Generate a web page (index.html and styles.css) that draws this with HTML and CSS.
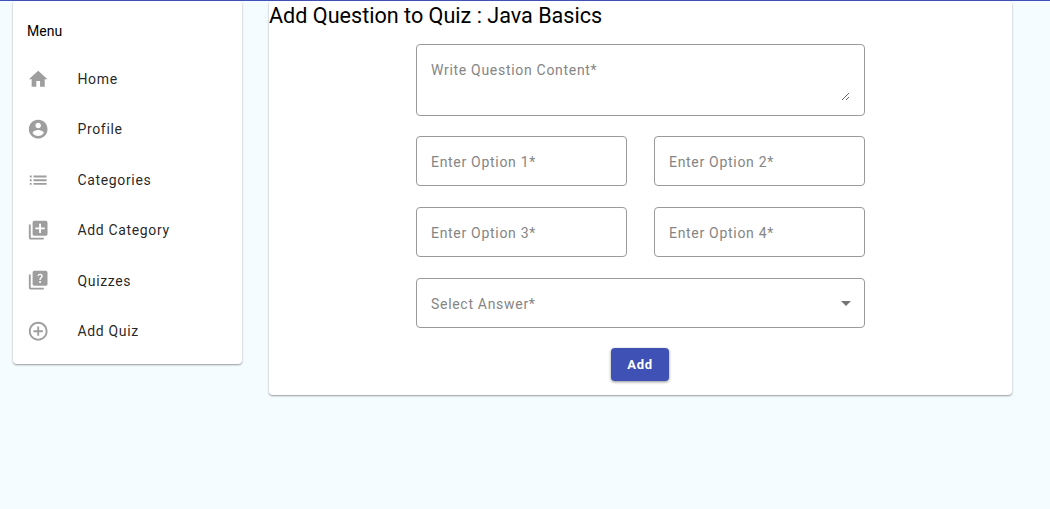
FILE: index.html
```html
<!DOCTYPE html>
<html>
<head>
  <title>Add Question</title>
  <link rel="stylesheet" href="styles.css">
</head>
<body>
  <div class="page">
    <aside class="card sidebar">
      <div class="menu-title">Menu</div>
      <ul class="menu">
        <li class="menu-item">
          <svg class="icon" viewBox="0 0 24 24"><path d="M10 20v-6h4v6h5v-8h3L12 3 2 12h3v8z"/></svg>
          <span>Home</span>
        </li>
        <li class="menu-item">
          <svg class="icon" viewBox="0 0 24 24"><path d="M12 2C6.48 2 2 6.48 2 12s4.48 10 10 10 10-4.48 10-10S17.52 2 12 2zm0 3c1.66 0 3 1.34 3 3s-1.34 3-3 3-3-1.34-3-3 1.34-3 3-3zm0 14.2c-2.5 0-4.71-1.28-6-3.22.03-1.99 4-3.08 6-3.08 1.99 0 5.97 1.09 6 3.08-1.29 1.94-3.5 3.22-6 3.22z"/></svg>
          <span>Profile</span>
        </li>
        <li class="menu-item">
          <svg class="icon" viewBox="0 0 24 24"><path d="M3 13h2v-2H3v2zm0 4h2v-2H3v2zm0-8h2V7H3v2zm4 4h14v-2H7v2zm0 4h14v-2H7v2zM7 7v2h14V7H7z"/></svg>
          <span>Categories</span>
        </li>
        <li class="menu-item">
          <svg class="icon" viewBox="0 0 24 24"><path d="M4 6H2v14c0 1.1.9 2 2 2h14v-2H4V6zm16-4H8c-1.1 0-2 .9-2 2v12c0 1.1.9 2 2 2h12c1.1 0 2-.9 2-2V4c0-1.1-.9-2-2-2zm-1 9h-4v4h-2v-4H9V9h4V5h2v4h4v2z"/></svg>
          <span>Add Category</span>
        </li>
        <li class="menu-item">
          <svg class="icon" viewBox="0 0 24 24"><path d="M4 6H2v14c0 1.1.9 2 2 2h14v-2H4V6zm16-4H8c-1.1 0-2 .9-2 2v12c0 1.1.9 2 2 2h12c1.1 0 2-.9 2-2V4c0-1.1-.9-2-2-2zm-5.99 13c-.59 0-1.05-.47-1.05-1.05 0-.59.47-1.04 1.05-1.04.59 0 1.04.45 1.04 1.04-.01.58-.45 1.05-1.04 1.05zm2.5-6.17c-.63.93-1.23 1.21-1.56 1.81-.13.24-.18.4-.18 1.18h-1.52c0-.41-.06-1.08.27-1.65.41-.73 1.18-1.16 1.63-1.8.48-.68.21-1.94-1.14-1.94-.88 0-1.32.67-1.5 1.23l-1.37-.57C11.51 5.96 12.52 5 13.99 5c1.23 0 2.08.56 2.51 1.26.37.61.58 1.73.01 2.57z"/></svg>
          <span>Quizzes</span>
        </li>
        <li class="menu-item">
          <svg class="icon" viewBox="0 0 24 24"><path d="M13 7h-2v4H7v2h4v4h2v-4h4v-2h-4V7zm-1-5C6.48 2 2 6.48 2 12s4.48 10 10 10 10-4.48 10-10S17.52 2 12 2zm0 18c-4.41 0-8-3.59-8-8s3.59-8 8-8 8 3.59 8 8-3.59 8-8 8z"/></svg>
          <span>Add Quiz</span>
        </li>
      </ul>
    </aside>

    <main class="card content">
      <h1 class="title">Add Question to Quiz : Java Basics</h1>
      <form class="question-form">
        <div class="field field-area">
          <textarea class="area-input" placeholder="Write Question Content*"></textarea>
        </div>
        <div class="option-row">
          <input class="field" type="text" placeholder="Enter Option 1*">
          <input class="field" type="text" placeholder="Enter Option 2*">
        </div>
        <div class="option-row">
          <input class="field" type="text" placeholder="Enter Option 3*">
          <input class="field" type="text" placeholder="Enter Option 4*">
        </div>
        <div class="field select">
          <span>Select Answer*</span>
          <span class="select-arrow"></span>
        </div>
        <button class="add-button" type="button">Add</button>
      </form>
    </main>
  </div>
</body>
</html>
```

FILE: styles.css
```css
html, body {
  height: 100%;
}

body {
  margin: 0;
  background-color: #f5fcff;
  border-top: 1px solid #3f51b5;
  box-sizing: border-box;
  color: #000;
  font-family: Roboto, "Liberation Sans", sans-serif;
}

.page {
  display: flex;
  align-items: flex-start;
  gap: 27px;
  padding-left: 13px;
}

.card {
  background-color: #fff;
  border-radius: 4px;
  box-shadow: 0 1px 2px rgba(0, 0, 0, 0.4);
}

.sidebar {
  width: 229px;
  padding-top: 8px;
  padding-bottom: 8px;
}

.menu-title {
  height: 44.9px;
  line-height: 44px;
  padding-left: 14px;
  font-size: 14px;
}

.menu {
  list-style: none;
  margin: 0;
  padding: 0;
}

.menu-item {
  display: flex;
  align-items: center;
  gap: 27.5px;
  height: 50.4px;
  padding-left: 13px;
  font-size: 14px;
  letter-spacing: 0.65px;
  color: rgba(0, 0, 0, 0.87);
}

/* icon glyph is a bit smaller than its 24px slot */
.icon {
  width: 22.4px;
  height: 22.4px;
  margin: 0 0.8px;
  fill: #9e9e9e;
}

.content {
  width: 743px;
  padding-bottom: 14px;
}

.title {
  margin: 0;
  height: 29px;
  line-height: 29px;
  font-size: 21.6px;
  font-weight: 400;
}

.question-form {
  display: flex;
  flex-direction: column;
  gap: 20.7px;
  width: 449px;
  margin: 13.6px auto 0;
}

.field {
  display: block;
  box-sizing: border-box;
  width: 100%;
  height: 50px;
  padding: 2px 14px 0;
  background-color: #fff;
  border: 1px solid #9a9a9a;
  border-radius: 4px;
  outline: none;
  color: #858585;
  font-family: inherit;
  font-size: 14px;
  letter-spacing: 0.7px;
}

.field::placeholder {
  color: #858585;
  opacity: 1;
}

.field-area {
  height: 72px;
  padding: 17px 14px 14px;
}

.area-input {
  display: block;
  box-sizing: border-box;
  width: 100%;
  height: 100%;
  margin: 0;
  padding: 0;
  border: none;
  outline: none;
  color: inherit;
  font: inherit;
  line-height: 16px;
  letter-spacing: inherit;
}

.area-input::placeholder {
  color: #858585;
  opacity: 1;
}

.option-row {
  display: grid;
  grid-template-columns: 211px 211px;
  justify-content: space-between;
}

.select {
  display: flex;
  align-items: center;
  justify-content: space-between;
}

.select-arrow {
  width: 0;
  height: 0;
  margin-right: -1px;
  border-left: 5px solid transparent;
  border-right: 5px solid transparent;
  border-top: 5px solid #757575;
}

.add-button {
  align-self: center;
  width: 58px;
  height: 33px;
  margin-right: 1px;
  border: none;
  border-radius: 4px;
  background-color: #3f51b5;
  box-shadow: 0 1px 3px rgba(0, 0, 0, 0.45);
  color: #fff;
  font-family: inherit;
  font-size: 13px;
  font-weight: 700;
  letter-spacing: 0.7px;
}
```
